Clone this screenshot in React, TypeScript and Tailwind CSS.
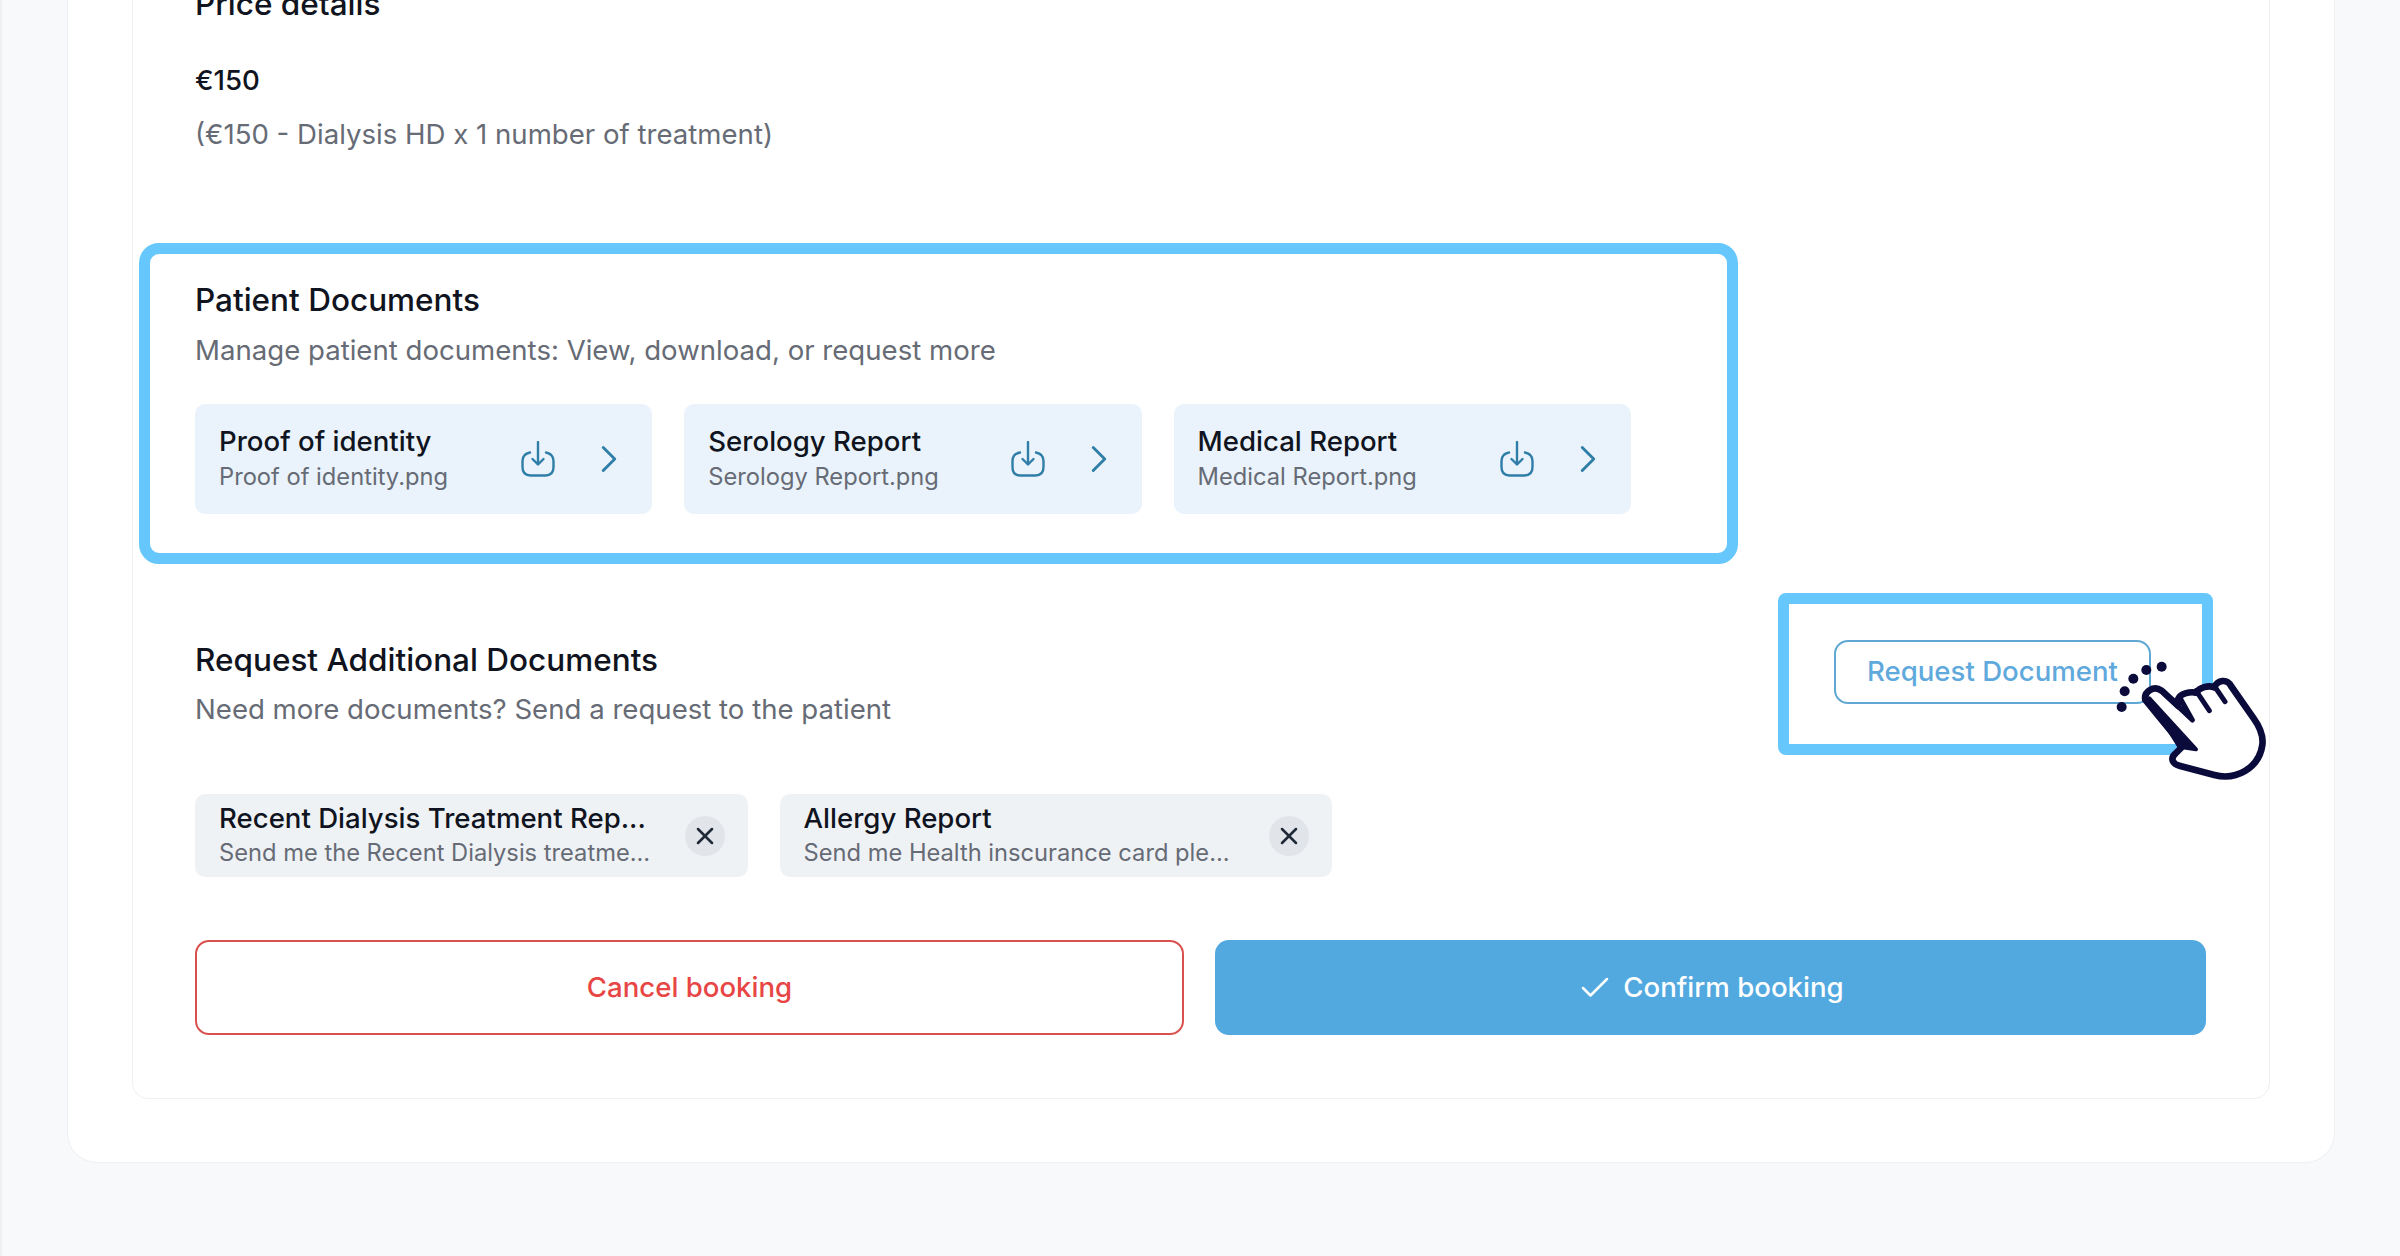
import { Check, ChevronRight, X } from "lucide-react"

const patientDocs = [
  { title: "Proof of identity", file: "Proof of identity.png" },
  { title: "Serology Report", file: "Serology Report.png" },
  { title: "Medical Report", file: "Medical Report.png" },
]

const requested = [
  { title: "Recent Dialysis Treatment Rep...", note: "Send me the Recent Dialysis treatme..." },
  { title: "Allergy Report", note: "Send me Health inscurance card ple..." },
]

function DownloadIcon() {
  return (
    <svg className="shrink-0" width="34" height="36" viewBox="0 0 34 36" fill="none" stroke="#2f7ea8" strokeWidth="2.4" strokeLinecap="round" strokeLinejoin="round">
      <path d="M17 1V23" />
      <path d="M11.5 18L17 23.5L22.5 18" />
      <path d="M9 11.5C3.5 12.5 1.5 15 1.5 20V26C1.5 31.5 4.5 34.5 9.5 34.5H24.5C29.5 34.5 32.5 31.5 32.5 26V20C32.5 15 30.5 12.5 25 11.5" />
    </svg>
  )
}

function DocCard({ title, file }: { title: string; file: string }) {
  return (
    <div className="flex h-[110px] w-[457.3px] items-center rounded-[10px] bg-[#eaf3fb] pl-[24px] pr-[20px]">
      <div className="min-w-0 flex-1 pb-[2px]">
        <div className="text-[27.6px] font-medium leading-[34px] text-[#0f1420]">{title}</div>
        <div className="mt-[3px] text-[23.7px] leading-[32px] text-[#666b75]">{file}</div>
      </div>
      <DownloadIcon />
      <ChevronRight className="ml-[31px] shrink-0 text-[#2f7ea8]" size={46} strokeWidth={1.5} />
    </div>
  )
}

function RequestChip({ title, note }: { title: string; note: string }) {
  return (
    <div className="flex h-[83px] w-[552.5px] items-center rounded-[10px] bg-[#eff2f5] pl-[24px] pr-[23px]">
      <div className="min-w-0 flex-1 pb-[2px]">
        <div className="whitespace-nowrap text-[27.6px] font-medium leading-[34px] text-[#0f1420]">{title}</div>
        <div className="mt-[3px] whitespace-nowrap text-[23.7px] leading-[30px] text-[#666b75]">{note}</div>
      </div>
      <span className="flex h-[40px] w-[40px] shrink-0 items-center justify-center rounded-full bg-[#e1e5ea] text-[#1f2937]">
        <X size={28} strokeWidth={2.2} />
      </span>
    </div>
  )
}

function PointerHand() {
  return (
    <svg className="absolute left-[267px] top-[10px]" width="180" height="140" viewBox="0 0 540 420" fill="none" strokeLinecap="round" strokeLinejoin="round">
      <circle cx="62" cy="171" r="15" fill="#0b0b3b" />
      <circle cx="71" cy="124" r="15" fill="#0b0b3b" />
      <circle cx="97" cy="86" r="15" fill="#0b0b3b" />
      <circle cx="136" cy="60" r="15" fill="#0b0b3b" />
      <circle cx="182" cy="50" r="15" fill="#0b0b3b" />
      <path
        d="M133 150C128 125 158 105 182 122L232 168L232 146C240 130 268 124 285 128C295 112 322 105 340 112C350 90 378 85 390 108L458 205C476 230 488 255 484 285C474 355 405 392 340 375L235 347C214 342 208 325 222 312L246 288Z"
        fill="#ffffff"
        stroke="#0b0b3b"
        strokeWidth="20"
      />
      <path d="M145 145L285 298L235 290Z" fill="#0b0b3b" stroke="#0b0b3b" strokeWidth="12" />
      <path d="M190 130L274 210M236 142L274 210M285 122L325 182M340 108L372 155" stroke="#0b0b3b" strokeWidth="15" />
    </svg>
  )
}

export default function App() {
  return (
    <div className="h-[1256px] overflow-hidden border-l-2 border-[#eef0f3] bg-[#f8f9fb] pl-[65px] pr-[65px] font-['Inter',sans-serif]">
      <div className="-mt-[120px] rounded-[30px] border border-[#eef0f3] bg-white px-[64px] pb-[63px] pt-[60px]">
        <div className="rounded-[16px] border border-[#eef0f3] bg-white pb-[63px] pl-[62px] pr-[63px] pt-[45px]">
          <h3 className="text-[31.5px] font-medium leading-[34px] text-[#0f1420]">Price details</h3>
          <p className="mt-[42px] text-[27.6px] font-medium leading-[34px] text-[#0f1420]">€150</p>
          <p className="mt-[20px] text-[27.6px] leading-[34px] text-[#666b75]">(€150 - Dialysis HD x 1 number of treatment)</p>

          <section className="relative mt-[129px]">
            <div className="pointer-events-none absolute -bottom-[50px] -left-[56px] -top-[37px] w-[1599px] rounded-[20px] border-[11px] border-[#66c7fc]" />
            <h3 className="pt-[2px] text-[31.5px] font-medium leading-[36px] text-[#0f1420]">Patient Documents</h3>
            <p className="mt-[15px] text-[27.6px] leading-[34px] text-[#666b75]">Manage patient documents: View, download, or request more</p>
            <div className="mt-[37px] flex gap-[32px]">
              {patientDocs.map((doc) => (
                <DocCard key={doc.title} title={doc.title} file={doc.file} />
              ))}
            </div>
          </section>

          <section className="mt-[126px] flex items-start justify-between">
            <div>
              <h3 className="pt-[2px] text-[31.5px] font-medium leading-[36px] text-[#0f1420]">Request Additional Documents</h3>
              <p className="mt-[14px] text-[27.6px] leading-[34px] text-[#666b75]">Need more documents? Send a request to the patient</p>
            </div>
            <div className="relative mr-[55px]">
              <div className="pointer-events-none absolute -bottom-[51px] -left-[56px] -right-[62px] -top-[47px] rounded-[8px] border-[11px] border-[#66c7fc]" />
              <button className="relative h-[64px] w-[317px] rounded-[14px] border-2 border-[#5fa8d3] bg-white text-[27.6px] font-medium text-[#5fa9dc]">
                Request Document
              </button>
              <PointerHand />
            </div>
          </section>

          <div className="mt-[68px] flex gap-[32px]">
            {requested.map((chip) => (
              <RequestChip key={chip.title} title={chip.title} note={chip.note} />
            ))}
          </div>

          <div className="mt-[63px] flex gap-[31px]">
            <button className="h-[95px] w-[989px] shrink-0 rounded-[14px] border-2 border-[#d9514f] bg-white text-[27.6px] font-medium text-[#e84545]">
              Cancel booking
            </button>
            <button className="flex h-[95px] flex-1 items-center justify-center gap-[10px] rounded-[14px] bg-[#52a9e0] text-[27.6px] font-medium text-white">
              <Check size={36} strokeWidth={1.7} />
              Confirm booking
            </button>
          </div>
        </div>
      </div>
    </div>
  )
}
